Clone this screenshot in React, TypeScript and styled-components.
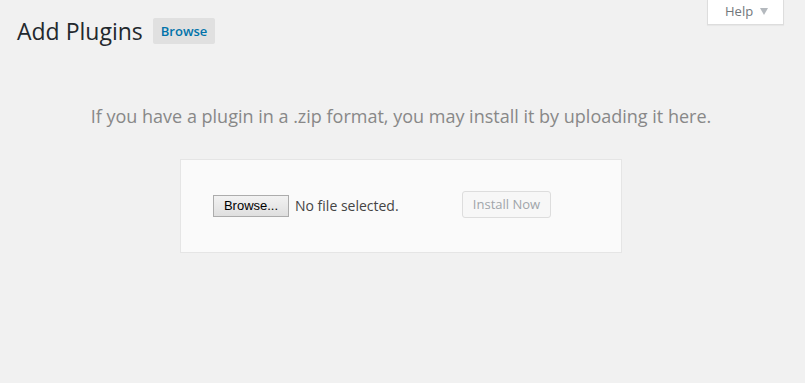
import React from 'react';
import styled, { createGlobalStyle } from 'styled-components';

const GlobalStyle = createGlobalStyle`
  html, body {
    margin: 0;
    padding: 0;
    background: #f1f1f1;
    font-family: "Open Sans", "Noto Sans", sans-serif;
    color: #444;
  }
`;

const Page = styled.div`
  position: relative;
  width: 805px;
  height: 383px;
  overflow: hidden;
  background: #f1f1f1;
`;

const HelpWrap = styled.div`
  display: flex;
  justify-content: flex-end;
  padding-right: 21px;
  height: 0;
`;

const HelpTab = styled.button`
  display: flex;
  align-items: center;
  gap: 7px;
  height: 25px;
  width: 77px;
  padding: 0 0 2px 17px;
  box-sizing: border-box;
  background: #fff;
  border: 1px solid #ddd;
  border-top: none;
  box-shadow: 0 1px 1px rgba(0, 0, 0, 0.04);
  font-family: "Open Sans", sans-serif;
  font-size: 13px;
  color: #72777c;
  cursor: pointer;
`;

const Arrow = styled.span`
  width: 0;
  height: 0;
  border-left: 4px solid transparent;
  border-right: 4px solid transparent;
  border-top: 7px solid #b4b9be;
`;

const Wrap = styled.div`
  padding: 0 20px 0 17px;
`;

const TitleRow = styled.div`
  display: flex;
  align-items: center;
  gap: 10px;
  padding-top: 17px;
`;

const Title = styled.h1`
  margin: 0;
  font-size: 23px;
  font-weight: 400;
  line-height: 29px;
  color: #23282d;
`;

const TitleAction = styled.a`
  display: inline-flex;
  align-items: center;
  height: 26px;
  padding: 0 8px;
  margin-top: -1px;
  background: #e0e0e0;
  border-radius: 2px;
  font-size: 13px;
  font-weight: 600;
  color: #0073aa;
  text-decoration: none;
  box-sizing: border-box;
`;

const Help = styled.p`
  margin: 58px 0 0;
  text-align: center;
  font-size: 18px;
  color: #888;
  line-height: 1.4;
`;

const UploadForm = styled.form`
  display: flex;
  align-items: center;
  width: 442px;
  height: 94px;
  box-sizing: border-box;
  margin: 30px 0 0 163px;
  padding: 0 32px 4px;
  background: #fafafa;
  border: 1px solid #e5e5e5;
`;

const FileButton = styled.button`
  height: 22px;
  width: 76px;
  padding: 0;
  margin-top: 3px;
  background: linear-gradient(#f2f2f2, #dfdfdf);
  border: 1px solid #acacac;
  border-radius: 0;
  font-family: "Liberation Sans", Arial, sans-serif;
  font-size: 13px;
  color: #000;
`;

const FileName = styled.span`
  margin: 3px 0 0 6px;
  width: 167px;
  font-size: 14px;
  color: #444;
`;

const InstallButton = styled.button`
  height: 27px;
  width: 89px;
  padding: 0 0 1px;
  white-space: nowrap;
  background: #f7f7f7;
  border: 1px solid #ddd;
  border-radius: 3px;
  font-family: "Open Sans", sans-serif;
  font-size: 13px;
  color: #a0a5aa;
`;

export default function App() {
  return (
    <Page>
      <GlobalStyle />
      <HelpWrap>
        <HelpTab type="button">
          Help <Arrow />
        </HelpTab>
      </HelpWrap>
      <Wrap>
        <TitleRow>
          <Title>Add Plugins</Title>
          <TitleAction href="#">Browse</TitleAction>
        </TitleRow>
        <Help>If you have a plugin in a .zip format, you may install it by uploading it here.</Help>
        <UploadForm onSubmit={(e) => e.preventDefault()}>
          <FileButton type="button">Browse...</FileButton>
          <FileName>No file selected.</FileName>
          <InstallButton type="submit" disabled>
            Install Now
          </InstallButton>
        </UploadForm>
      </Wrap>
    </Page>
  );
}
